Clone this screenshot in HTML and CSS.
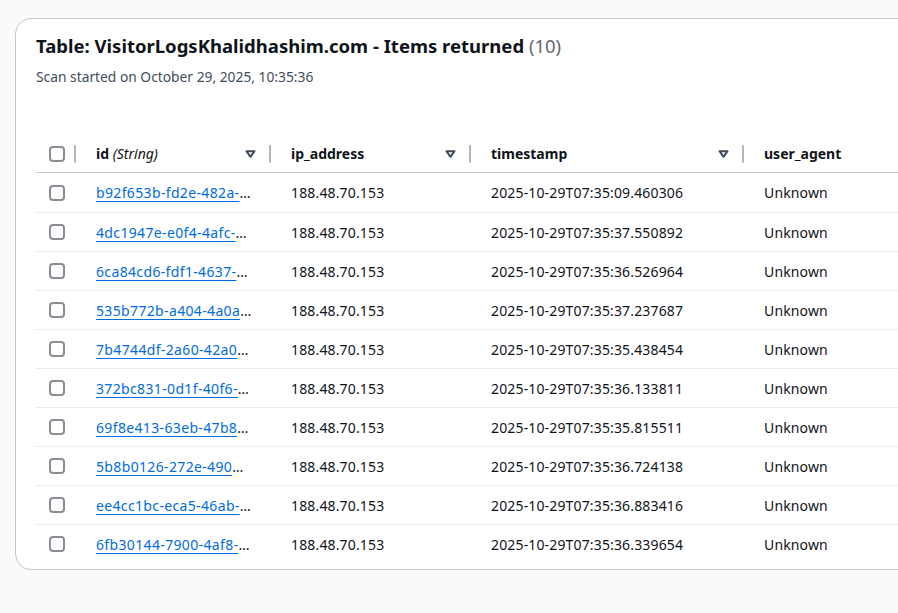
FILE: index.html
```html
<!DOCTYPE html>
<html lang="en">
<head>
<meta charset="utf-8">
<title>Items returned</title>
<link rel="stylesheet" href="styles.css">
</head>
<body>
<div class="card">
  <div class="card-head">
    <h2 class="title">Table: VisitorLogsKhalidhashim.com - Items returned <span class="count">(10)</span></h2>
    <p class="subtitle">Scan started on October 29, 2025, 10:35:36</p>
  </div>
  <div class="table">
    <div class="row head">
      <div class="hcell check-col"><span class="checkbox"></span><span class="fill"></span><span class="sep"></span></div>
      <div class="hcell"><span class="label">id <em>(String)</em></span><svg class="sort" width="11" height="8" viewBox="0 0 11 8"><polygon points="1.5,1.2 9.5,1.2 5.5,6.8" fill="none" stroke="#414d5c" stroke-width="2" stroke-linejoin="round"/></svg><span class="sep"></span></div>
      <div class="hcell"><span class="label">ip_address</span><svg class="sort" width="11" height="8" viewBox="0 0 11 8"><polygon points="1.5,1.2 9.5,1.2 5.5,6.8" fill="none" stroke="#414d5c" stroke-width="2" stroke-linejoin="round"/></svg><span class="sep"></span></div>
      <div class="hcell"><span class="label">timestamp</span><svg class="sort" width="11" height="8" viewBox="0 0 11 8"><polygon points="1.5,1.2 9.5,1.2 5.5,6.8" fill="none" stroke="#414d5c" stroke-width="2" stroke-linejoin="round"/></svg><span class="sep"></span></div>
      <div class="hcell"><span class="label">user_agent</span></div>
    </div>
    <div class="row"><div class="cell check-col"><span class="checkbox"></span></div><div class="cell id"><a href="#">b92f653b-fd2e-482a-</a>…</div><div class="cell">188.48.70.153</div><div class="cell">2025-10-29T07:35:09.460306</div><div class="cell">Unknown</div></div>
    <div class="row"><div class="cell check-col"><span class="checkbox"></span></div><div class="cell id"><a href="#">4dc1947e-e0f4-4afc-</a>…</div><div class="cell">188.48.70.153</div><div class="cell">2025-10-29T07:35:37.550892</div><div class="cell">Unknown</div></div>
    <div class="row"><div class="cell check-col"><span class="checkbox"></span></div><div class="cell id"><a href="#">6ca84cd6-fdf1-4637-</a>…</div><div class="cell">188.48.70.153</div><div class="cell">2025-10-29T07:35:36.526964</div><div class="cell">Unknown</div></div>
    <div class="row"><div class="cell check-col"><span class="checkbox"></span></div><div class="cell id"><a href="#">535b772b-a404-4a0a</a>…</div><div class="cell">188.48.70.153</div><div class="cell">2025-10-29T07:35:37.237687</div><div class="cell">Unknown</div></div>
    <div class="row"><div class="cell check-col"><span class="checkbox"></span></div><div class="cell id"><a href="#">7b4744df-2a60-42a0</a>…</div><div class="cell">188.48.70.153</div><div class="cell">2025-10-29T07:35:35.438454</div><div class="cell">Unknown</div></div>
    <div class="row"><div class="cell check-col"><span class="checkbox"></span></div><div class="cell id"><a href="#">372bc831-0d1f-40f6-</a>…</div><div class="cell">188.48.70.153</div><div class="cell">2025-10-29T07:35:36.133811</div><div class="cell">Unknown</div></div>
    <div class="row"><div class="cell check-col"><span class="checkbox"></span></div><div class="cell id"><a href="#">69f8e413-63eb-47b8</a>…</div><div class="cell">188.48.70.153</div><div class="cell">2025-10-29T07:35:35.815511</div><div class="cell">Unknown</div></div>
    <div class="row"><div class="cell check-col"><span class="checkbox"></span></div><div class="cell id"><a href="#">5b8b0126-272e-490</a>…</div><div class="cell">188.48.70.153</div><div class="cell">2025-10-29T07:35:36.724138</div><div class="cell">Unknown</div></div>
    <div class="row"><div class="cell check-col"><span class="checkbox"></span></div><div class="cell id"><a href="#">ee4cc1bc-eca5-46ab-</a>…</div><div class="cell">188.48.70.153</div><div class="cell">2025-10-29T07:35:36.883416</div><div class="cell">Unknown</div></div>
    <div class="row"><div class="cell check-col"><span class="checkbox"></span></div><div class="cell id"><a href="#">6fb30144-7900-4af8-</a>…</div><div class="cell">188.48.70.153</div><div class="cell">2025-10-29T07:35:36.339654</div><div class="cell">Unknown</div></div>
  </div>
</div>
</body>
</html>
```

FILE: styles.css
```css
html, body {
  margin: 0;
  padding: 0;
}
body {
  background: #fafafa;
  font-family: "Noto Sans", "Open Sans", sans-serif;
  font-size: 14px;
  color: #0f141a;
  overflow: hidden;
  height: 613px;
}
.card {
  margin: 18px 0 0 15px;
  width: 1000px;
  background: #ffffff;
  border: 1px solid #c6c6cd;
  border-radius: 16px;
  padding: 0 0 6px 20px;
}
.card-head {
  padding-top: 14px;
  height: 102px;
}
.title {
  margin: 0;
  font-size: 18.5px;
  line-height: 26px;
  font-weight: 700;
}
.count {
  font-weight: 400;
  color: #656871;
}
.subtitle {
  margin: 8px 0 0;
  font-size: 13.8px;
  line-height: 20px;
  color: #414d5c;
}
.row {
  display: grid;
  grid-template-columns: 40px 195px 200px 273px 1fr;
  height: 38px;
  align-items: center;
  border-bottom: 1px solid #ebebf0;
}
.row.head + .row {
  height: 39px;
}
.row:last-child {
  border-bottom: none;
}
.row.head {
  height: 37px;
  border-bottom: 1px solid #c6c6cd;
  font-weight: 700;
}
.hcell {
  display: flex;
  align-items: center;
  padding-left: 20px;
}
.hcell em {
  font-weight: 400;
}
.label {
  flex: 1;
  white-space: nowrap;
}
.sort {
  margin-right: 13px;
  display: block;
  flex-shrink: 0;
}
.sep {
  width: 2px;
  height: 18px;
  background: #b4b4bb;
  border-radius: 1px;
  flex-shrink: 0;
}
.fill {
  flex: 1;
}
.cell {
  padding-left: 20px;
  padding-right: 10px;
  white-space: nowrap;
  overflow: hidden;
  letter-spacing: 0.15px;
}
.hcell.check-col,
.cell.check-col {
  padding-left: 13px;
}
.cell.check-col {
  display: flex;
  align-items: center;
  padding-right: 0;
}
.checkbox {
  display: block;
  flex-shrink: 0;
  width: 16px;
  height: 16px;
  box-sizing: border-box;
  border: 2px solid #8c8c94;
  border-radius: 4px;
  background: #fff;
}
.cell.id {
  letter-spacing: 0.35px;
}
.cell.id a {
  color: #006ce0;
  text-decoration: underline;
  text-underline-offset: 3px;
}
```
